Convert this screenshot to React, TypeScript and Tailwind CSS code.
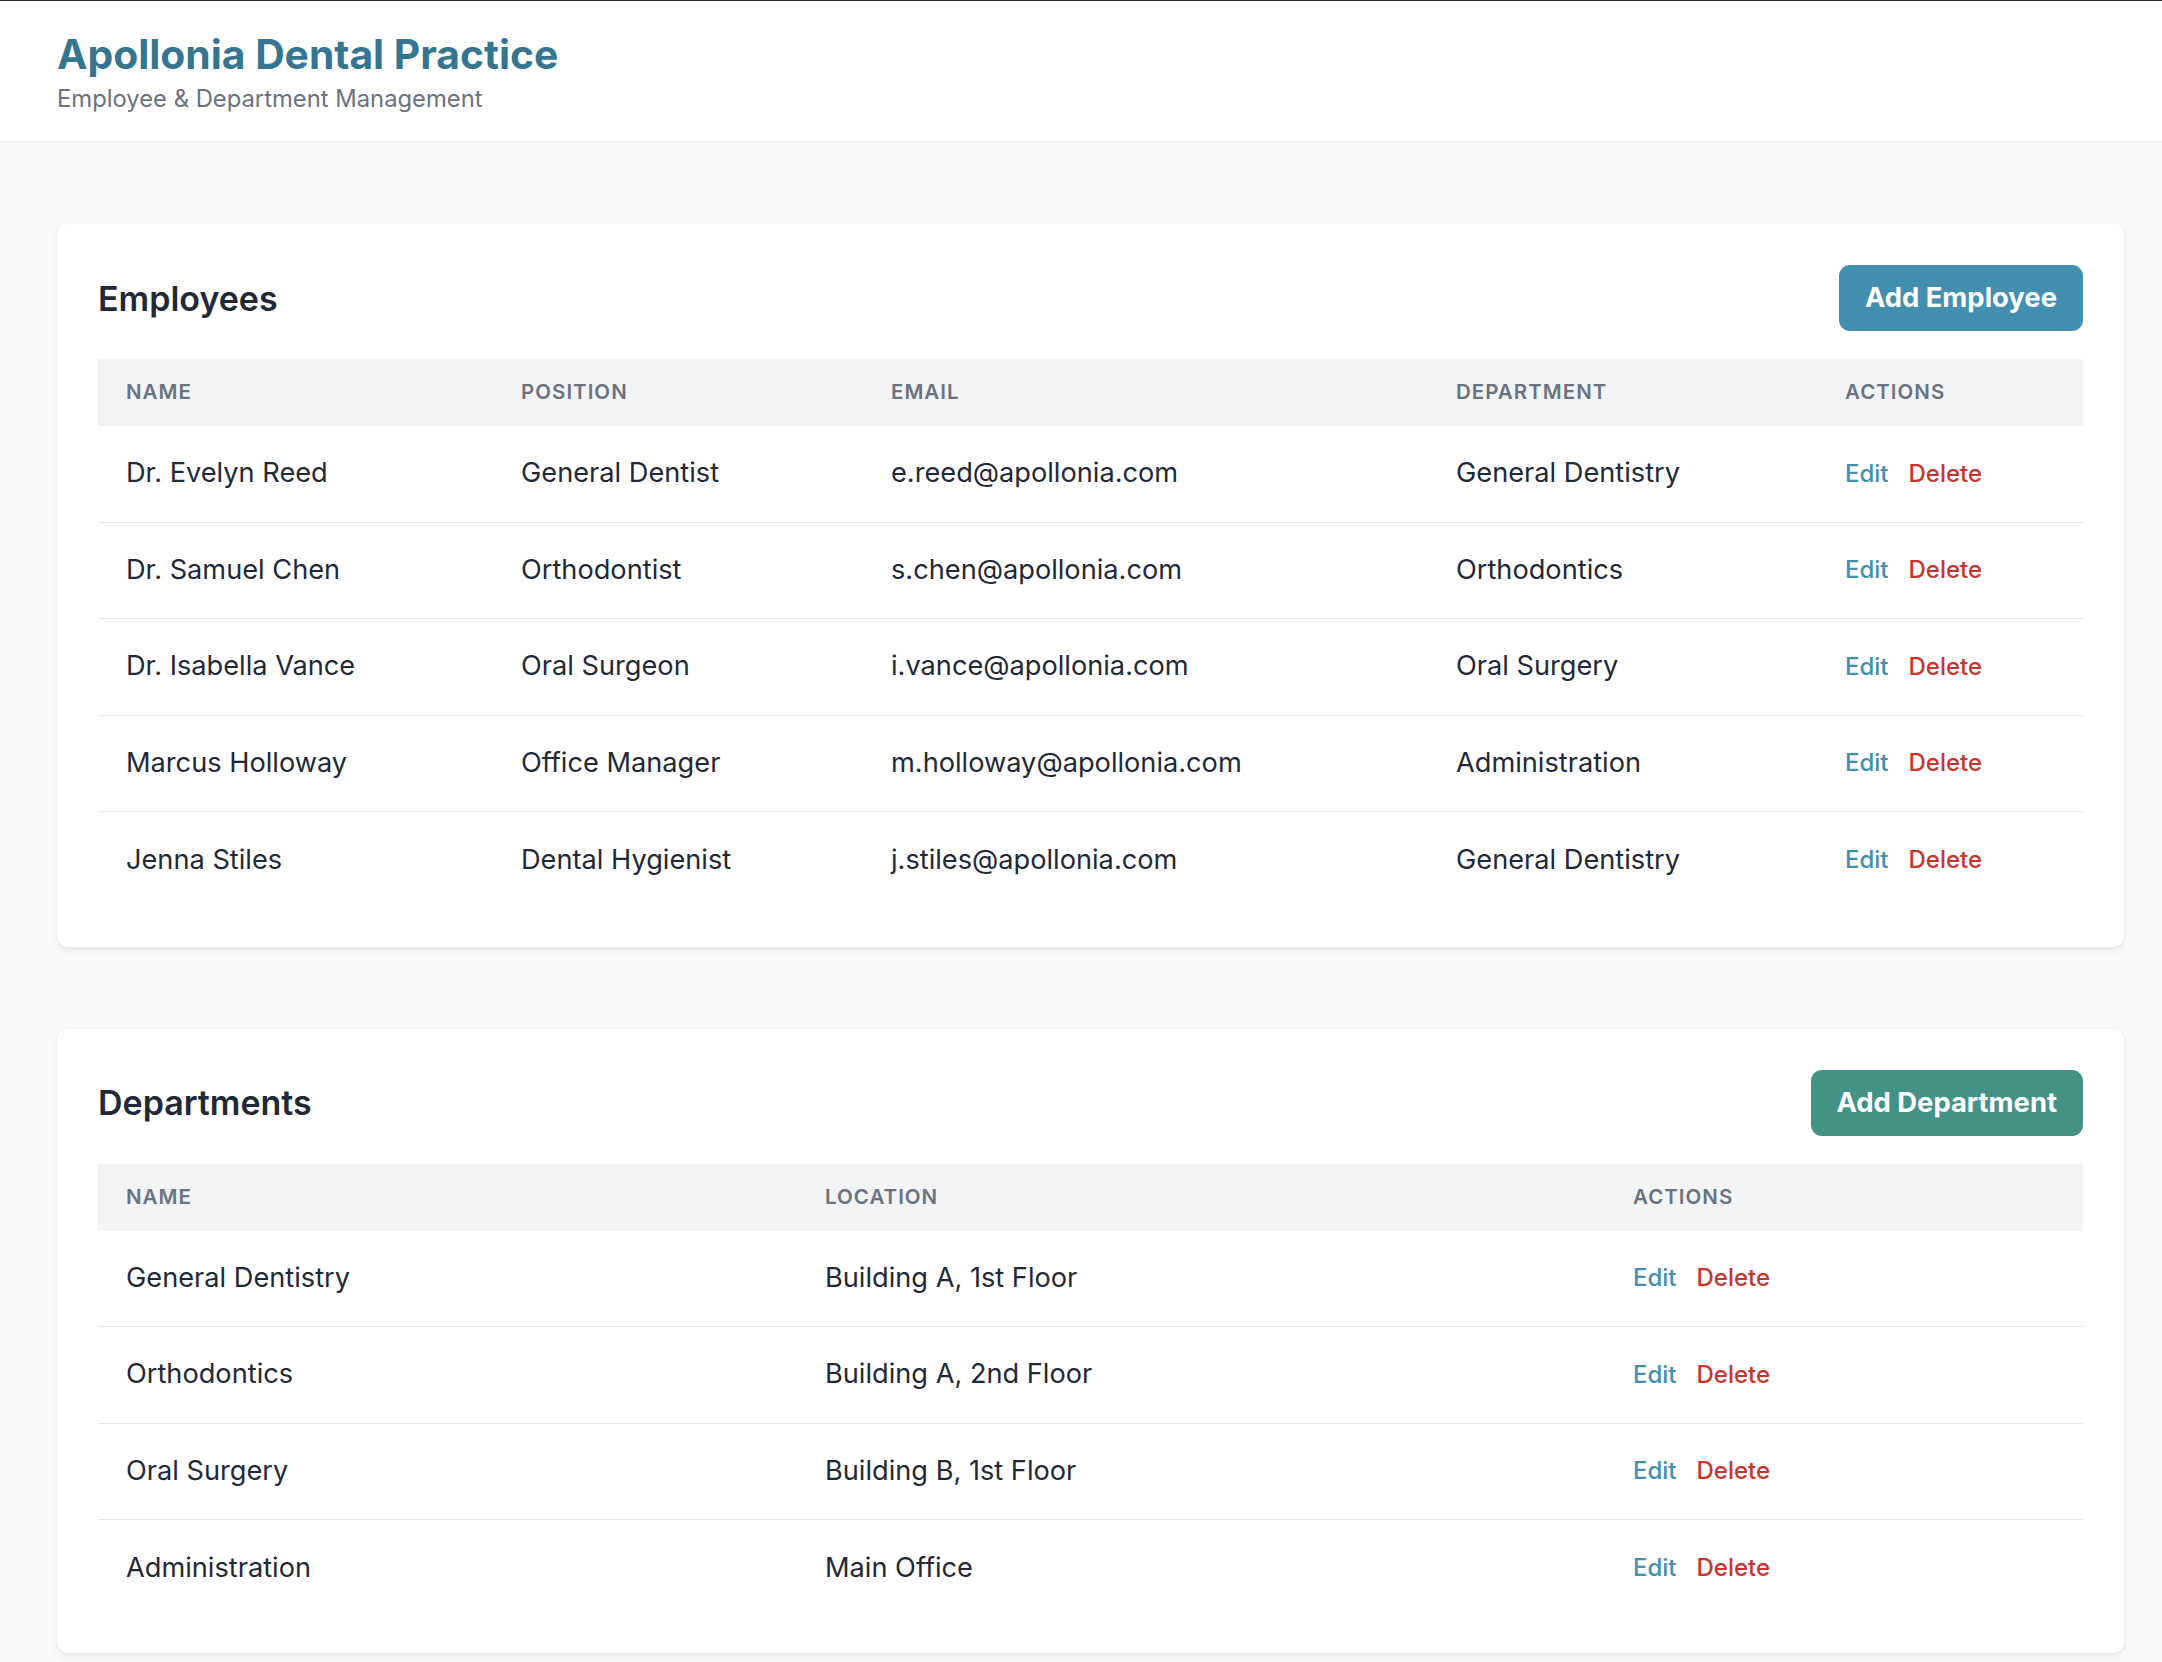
import React from "react";

const employees = [
  ["Dr. Evelyn Reed", "General Dentist", "e.reed@apollonia.com", "General Dentistry"],
  ["Dr. Samuel Chen", "Orthodontist", "s.chen@apollonia.com", "Orthodontics"],
  ["Dr. Isabella Vance", "Oral Surgeon", "i.vance@apollonia.com", "Oral Surgery"],
  ["Marcus Holloway", "Office Manager", "m.holloway@apollonia.com", "Administration"],
  ["Jenna Stiles", "Dental Hygienist", "j.stiles@apollonia.com", "General Dentistry"],
];

const departments = [
  ["General Dentistry", "Building A, 1st Floor"],
  ["Orthodontics", "Building A, 2nd Floor"],
  ["Oral Surgery", "Building B, 1st Floor"],
  ["Administration", "Main Office"],
];

function Actions() {
  return (
    <div className="flex items-center gap-[20px] text-[24px] font-medium">
      <span className="text-[#4290b0]">Edit</span>
      <span className="text-[#c8352e]">Delete</span>
    </div>
  );
}

function HeadCell({ children }: { children: React.ReactNode }) {
  return (
    <div className="px-[28px] text-[20.5px] font-semibold uppercase tracking-[0.05em] text-[#6b7280]">
      {children}
    </div>
  );
}

function Cell({ children }: { children: React.ReactNode }) {
  return <div className="px-[28px] text-[27.2px] text-[#1f2937] whitespace-nowrap">{children}</div>;
}

export default function App() {
  return (
    <div className="min-h-screen bg-[#f9fafb] font-['Inter',sans-serif]">
      <header className="border-t border-[#2d2d2d] bg-white pt-[28px] pb-[26px] pl-[57px] shadow-[0_1px_3px_rgba(0,0,0,0.06)]">
        <h1 className="text-[40.8px] leading-[50px] font-bold text-[#357590]">Apollonia Dental Practice</h1>
        <p className="mt-[3px] text-[23.8px] leading-[33px] text-[#6b7280]">Employee &amp; Department Management</p>
      </header>

      <main className="pl-[57px] pr-[38px] pt-[83px] pb-[40px] flex flex-col gap-[82px]">
        <section className="rounded-[11px] bg-white px-[41px] pt-[41px] pb-[38px] shadow-[0_4px_8px_rgba(0,0,0,0.06),0_1px_3px_rgba(0,0,0,0.05)]">
          <div className="mb-[28px] flex items-center justify-between">
            <h2 className="text-[34px] font-semibold text-[#1f2937]">Employees</h2>
            <button className="h-[66px] rounded-[11px] bg-[#428faf] px-[26px] text-[27.4px] font-bold text-white">
              Add Employee
            </button>
          </div>
          <div className="grid h-[67px] grid-cols-[395px_370px_565px_389px_1fr] items-center bg-[#f3f4f6]">
            <HeadCell>Name</HeadCell>
            <HeadCell>Position</HeadCell>
            <HeadCell>Email</HeadCell>
            <HeadCell>Department</HeadCell>
            <HeadCell>Actions</HeadCell>
          </div>
          <div className="divide-y-[1.5px] divide-[#e5e7eb]">
            {employees.map((e) => (
              <div key={e[0]} className="grid h-[96.5px] grid-cols-[395px_370px_565px_389px_1fr] items-center">
                <Cell>{e[0]}</Cell>
                <Cell>{e[1]}</Cell>
                <Cell>{e[2]}</Cell>
                <Cell>{e[3]}</Cell>
                <div className="px-[28px]">
                  <Actions />
                </div>
              </div>
            ))}
          </div>
        </section>

        <section className="rounded-[11px] bg-white px-[41px] pt-[41px] pb-[36px] shadow-[0_4px_8px_rgba(0,0,0,0.06),0_1px_3px_rgba(0,0,0,0.05)]">
          <div className="mb-[28px] flex items-center justify-between">
            <h2 className="text-[34px] font-semibold text-[#1f2937]">Departments</h2>
            <button className="h-[66px] rounded-[11px] bg-[#439286] px-[26px] text-[27.4px] font-bold text-white">
              Add Department
            </button>
          </div>
          <div className="grid h-[67px] grid-cols-[699px_808px_1fr] items-center bg-[#f3f4f6]">
            <HeadCell>Name</HeadCell>
            <HeadCell>Location</HeadCell>
            <HeadCell>Actions</HeadCell>
          </div>
          <div className="divide-y-[1.5px] divide-[#e5e7eb]">
            {departments.map((d) => (
              <div key={d[0]} className="grid h-[96.5px] grid-cols-[699px_808px_1fr] items-center">
                <Cell>{d[0]}</Cell>
                <Cell>{d[1]}</Cell>
                <div className="px-[28px]">
                  <Actions />
                </div>
              </div>
            ))}
          </div>
        </section>
      </main>
    </div>
  );
}
